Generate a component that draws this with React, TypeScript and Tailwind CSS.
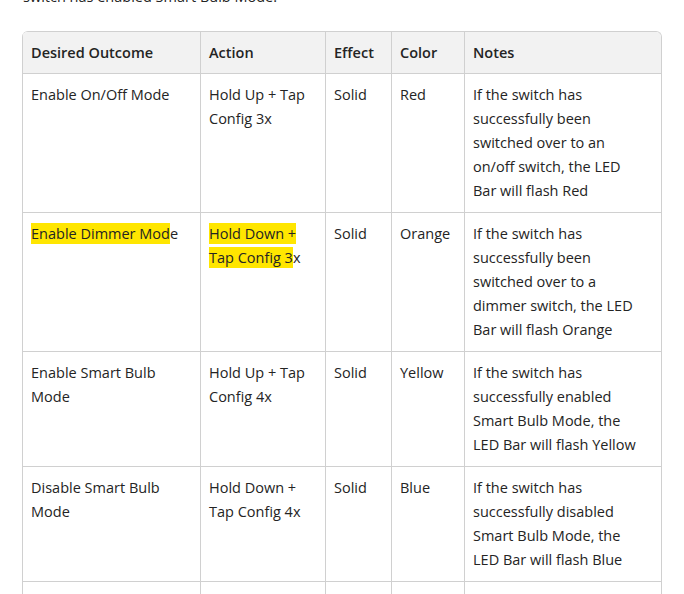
import React from "react";

type Row = {
  outcome: React.ReactNode;
  action: React.ReactNode;
  effect: string;
  color: string;
  notes: string[];
};

const Hl = ({ children }: { children: React.ReactNode }) => (
  <mark className="bg-[#ffe600] text-[#242424] py-[1px]">{children}</mark>
);

const rows: Row[] = [
  {
    outcome: "Enable On/Off Mode",
    action: (
      <>
        Hold Up + Tap
        <br />
        Config 3x
      </>
    ),
    effect: "Solid",
    color: "Red",
    notes: [
      "If the switch has",
      "successfully been",
      "switched over to an",
      "on/off switch, the LED",
      "Bar will flash Red",
    ],
  },
  {
    outcome: (
      <>
        <Hl>Enable Dimmer Mod</Hl>e
      </>
    ),
    action: (
      <>
        <Hl>Hold Down +</Hl>
        <br />
        <Hl>Tap Config 3</Hl>x
      </>
    ),
    effect: "Solid",
    color: "Orange",
    notes: [
      "If the switch has",
      "successfully been",
      "switched over to a",
      "dimmer switch, the LED",
      "Bar will flash Orange",
    ],
  },
  {
    outcome: (
      <>
        Enable Smart Bulb
        <br />
        Mode
      </>
    ),
    action: (
      <>
        Hold Up + Tap
        <br />
        Config 4x
      </>
    ),
    effect: "Solid",
    color: "Yellow",
    notes: [
      "If the switch has",
      "successfully enabled",
      "Smart Bulb Mode, the",
      "LED Bar will flash Yellow",
    ],
  },
  {
    outcome: (
      <>
        Disable Smart Bulb
        <br />
        Mode
      </>
    ),
    action: (
      <>
        Hold Down +
        <br />
        Tap Config 4x
      </>
    ),
    effect: "Solid",
    color: "Blue",
    notes: [
      "If the switch has",
      "successfully disabled",
      "Smart Bulb Mode, the",
      "LED Bar will flash Blue",
    ],
  },
  {
    outcome: "Reset",
    action: "Tap Config 10x",
    effect: "Solid",
    color: "White",
    notes: ["The switch will reset"],
  },
];

const td = "border-t border-l border-[#d0d0d0] px-[8px] py-[9px] align-top whitespace-nowrap";
const th = "border-l border-[#d0d0d0] px-[8px] pt-[9px] pb-[8px] font-semibold whitespace-nowrap";

export default function App() {
  return (
    <div className="h-[594px] overflow-hidden bg-white text-[14.5px] leading-[24px] text-[#242424] font-['Open_Sans',sans-serif]">
      <p className="mt-[-15px] px-[23px]">switch has enabled Smart Bulb Mode.</p>
      <div className="mx-[22px] mt-[22px] w-[640px] overflow-hidden rounded-t-[6px] border-r border-t border-[#d0d0d0]">
        <table className="w-full table-fixed border-collapse">
          <colgroup>
            <col className="w-[178px]" />
            <col className="w-[125px]" />
            <col className="w-[66px]" />
            <col className="w-[73px]" />
            <col />
          </colgroup>
          <thead>
            <tr className="bg-[#f2f2f2] text-left">
              <th className={th}>Desired Outcome</th>
              <th className={th}>Action</th>
              <th className={th}>Effect</th>
              <th className={th}>Color</th>
              <th className={th}>Notes</th>
            </tr>
          </thead>
          <tbody>
            {rows.map((r, i) => (
              <tr key={i}>
                <td className={td}>{r.outcome}</td>
                <td className={td}>{r.action}</td>
                <td className={td}>{r.effect}</td>
                <td className={td}>{r.color}</td>
                <td className={td}>
                  {r.notes.map((n, j) => (
                    <div key={j}>{n}</div>
                  ))}
                </td>
              </tr>
            ))}
          </tbody>
        </table>
      </div>
    </div>
  );
}
